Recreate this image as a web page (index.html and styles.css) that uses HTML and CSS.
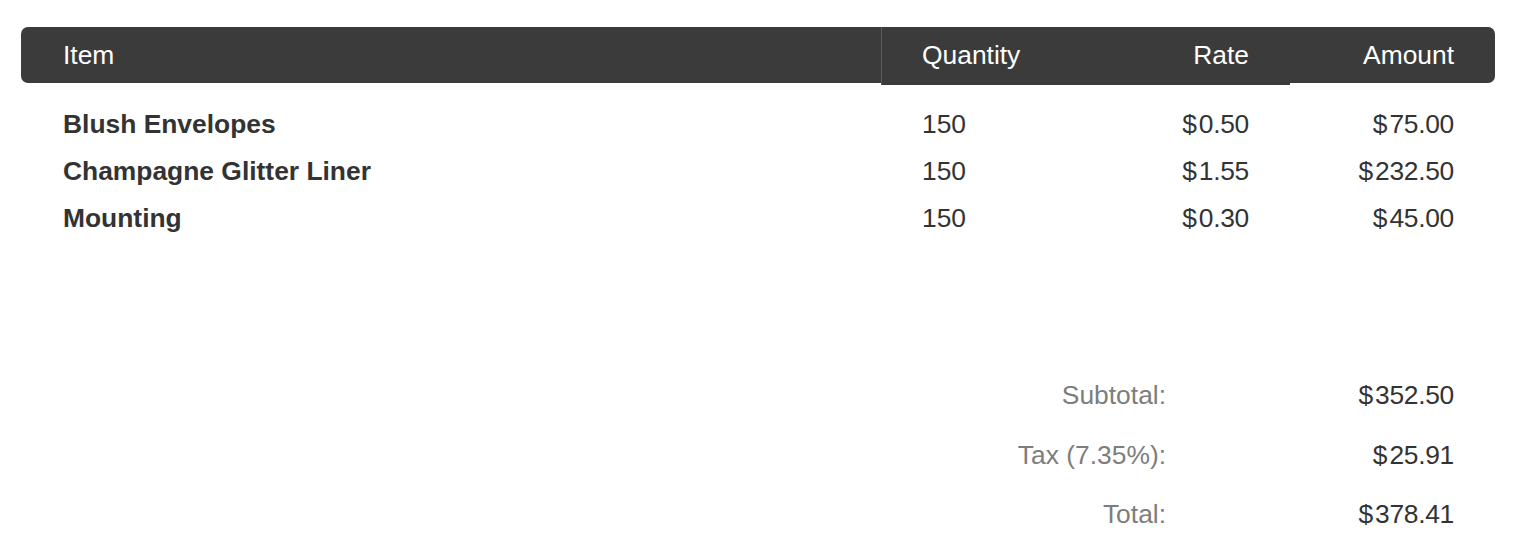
FILE: index.html
```html
<!DOCTYPE html>
<html lang="en">
<head>
<meta charset="utf-8">
<title>Invoice items</title>
<link rel="stylesheet" href="styles.css">
</head>
<body>
<div class="invoice">
  <div class="head">
    <div class="hcell c-item">Item</div>
    <div class="hmid">
      <div class="hcell c-qty">Quantity</div>
      <div class="hcell c-rate">Rate</div>
    </div>
    <div class="hcell c-amt">Amount</div>
  </div>

  <div class="lines">
    <div class="line">
      <div class="c-item name">Blush Envelopes</div>
      <div class="c-qty">150</div>
      <div class="c-rate">$<span class="num">0.50</span></div>
      <div class="c-amt">$<span class="num">75.00</span></div>
    </div>
    <div class="line">
      <div class="c-item name">Champagne Glitter Liner</div>
      <div class="c-qty">150</div>
      <div class="c-rate">$<span class="num">1.55</span></div>
      <div class="c-amt">$<span class="num">232.50</span></div>
    </div>
    <div class="line">
      <div class="c-item name">Mounting</div>
      <div class="c-qty">150</div>
      <div class="c-rate">$<span class="num">0.30</span></div>
      <div class="c-amt">$<span class="num">45.00</span></div>
    </div>
  </div>

  <div class="totals">
    <div class="trow">
      <div class="tlabel">Subtotal:</div>
      <div class="tval">$<span class="num">352.50</span></div>
    </div>
    <div class="trow">
      <div class="tlabel">Tax (7.35%):</div>
      <div class="tval">$<span class="num">25.91</span></div>
    </div>
    <div class="trow">
      <div class="tlabel">Total:</div>
      <div class="tval">$<span class="num">378.41</span></div>
    </div>
  </div>
</div>
</body>
</html>
```

FILE: styles.css
```css
html, body {
  margin: 0;
  padding: 0;
  background: #ffffff;
}

body {
  font-family: "Liberation Sans", Arial, sans-serif;
  font-size: 26.4px;
  color: #333333;
}

.invoice {
  padding: 27px 29px 0 21px;
}

.head {
  display: flex;
  align-items: flex-start;
  color: #ffffff;
}

.hcell {
  height: 56px;
  line-height: 56px;
  background: #3b3b3b;
}

.head .c-item {
  width: 860px;
  box-sizing: border-box;
  padding-left: 42px;
  border-radius: 7px 0 0 7px;
}

.hmid {
  display: flex;
  border-left: 1px solid #5c5c5c;
  background: #3b3b3b;
}

.hmid .hcell {
  height: 58px;
  line-height: 56px;
}

.head .c-qty {
  width: 203px;
  box-sizing: border-box;
  padding-left: 40px;
}

.head .c-rate {
  width: 205px;
  box-sizing: border-box;
  padding-right: 41px;
  text-align: right;
}

.head .c-amt {
  width: 205px;
  box-sizing: border-box;
  padding-right: 41px;
  text-align: right;
  border-radius: 0 7px 7px 0;
}

.lines {
  padding-top: 16px;
}

.line {
  display: flex;
  height: 47px;
  line-height: 47px;
}

.line .c-item {
  width: 860px;
  box-sizing: border-box;
  padding-left: 42px;
}

.name {
  font-weight: bold;
  color: #333333;
}

.line .c-qty {
  width: 204px;
  box-sizing: border-box;
  padding-left: 41px;
}

.line .c-rate {
  width: 205px;
  box-sizing: border-box;
  padding-right: 41px;
  text-align: right;
}

.line .c-amt {
  width: 205px;
  box-sizing: border-box;
  padding-right: 41px;
  text-align: right;
}

.num {
  margin-left: 2px;
  letter-spacing: -0.3px;
}

.totals {
  padding-top: 124px;
}

.trow {
  display: flex;
  height: 59.5px;
  line-height: 59.5px;
}

.tlabel {
  flex: 1;
  text-align: right;
  padding-right: 124px;
  color: #7d7d7d;
}

.tval {
  width: 205px;
  box-sizing: border-box;
  padding-right: 41px;
  text-align: right;
  color: #333333;
}
```
